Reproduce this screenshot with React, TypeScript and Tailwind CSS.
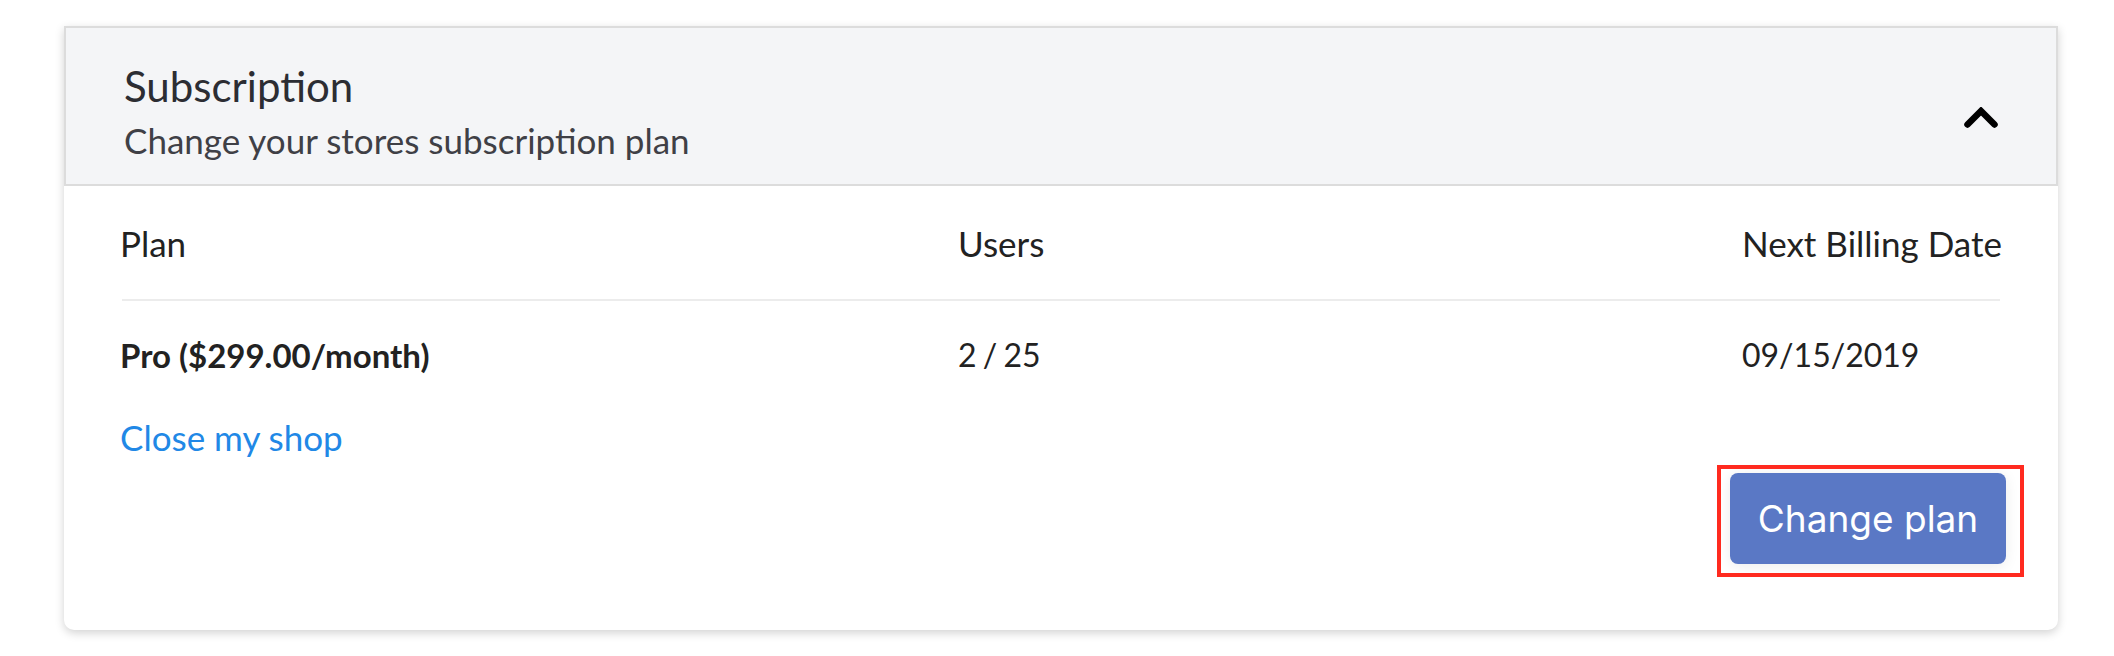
export default function App() {
  return (
    <div className="min-h-screen bg-white pt-[26px] pl-[64px] font-['Lato',sans-serif]">
      <div className="w-[1994px] rounded-b-[10px] bg-white shadow-[0_3px_10px_rgba(0,0,0,0.18)]">
        {/* header */}
        <div className="flex items-start justify-between border-2 border-[#dcdcdc] bg-[#f4f5f7] pl-[58px] pr-[58px] pt-[34px] pb-[25px]">
          <div>
            <h2 className="text-[42px] leading-[48px] text-[#2c2d33]">Subscription</h2>
            <p className="mt-[11px] text-[35px] leading-[38px] text-[#3f4046]">
              Change your stores subscription plan
            </p>
          </div>
          <svg width="34" height="21" viewBox="0 0 34 21" className="mt-[45px]">
            <polyline
              points="3.5,17.5 17,4 30.5,17.5"
              fill="none"
              stroke="#000"
              strokeWidth="6.5"
              strokeLinecap="round"
              strokeLinejoin="miter"
            />
          </svg>
        </div>

        {/* body */}
        <div className="pl-[56px] pr-[52px] pt-[38px] pb-[66px] text-[35px] leading-[38px] text-[#222]">
          <div className="grid grid-cols-[838px_784px_1fr] pb-[37px]">
            <div>Plan</div>
            <div>Users</div>
            <div>Next Billing Date</div>
          </div>
          <div className="ml-[2px] mr-[6px] h-[2px] bg-[#ececec]" />
          <div className="mt-[35px] grid grid-cols-[838px_784px_1fr] text-[32px]">
            <div className="text-[33px] font-bold">Pro ($299.00/month)</div>
            <div className="[word-spacing:-2px]">2 / 25</div>
            <div>09/15/2019</div>
          </div>
          <div className="mt-[44px]">
            <a href="#" className="text-[#2188e6]">Close my shop</a>
          </div>
          <div className="mt-[17px] flex justify-end">
            <div className="relative">
              <button className="h-[91px] w-[276px] rounded-[8px] bg-[#5a78c5] font-['Inter',sans-serif] text-[37px] text-white shadow-[0_2px_14px_rgba(0,0,0,0.08)]">
                Change plan
              </button>
              <div className="pointer-events-none absolute -left-[13px] -top-[8px] -right-[18px] -bottom-[13px] border-4 border-[#ff2a1f]" />
            </div>
          </div>
        </div>
      </div>
    </div>
  );
}
